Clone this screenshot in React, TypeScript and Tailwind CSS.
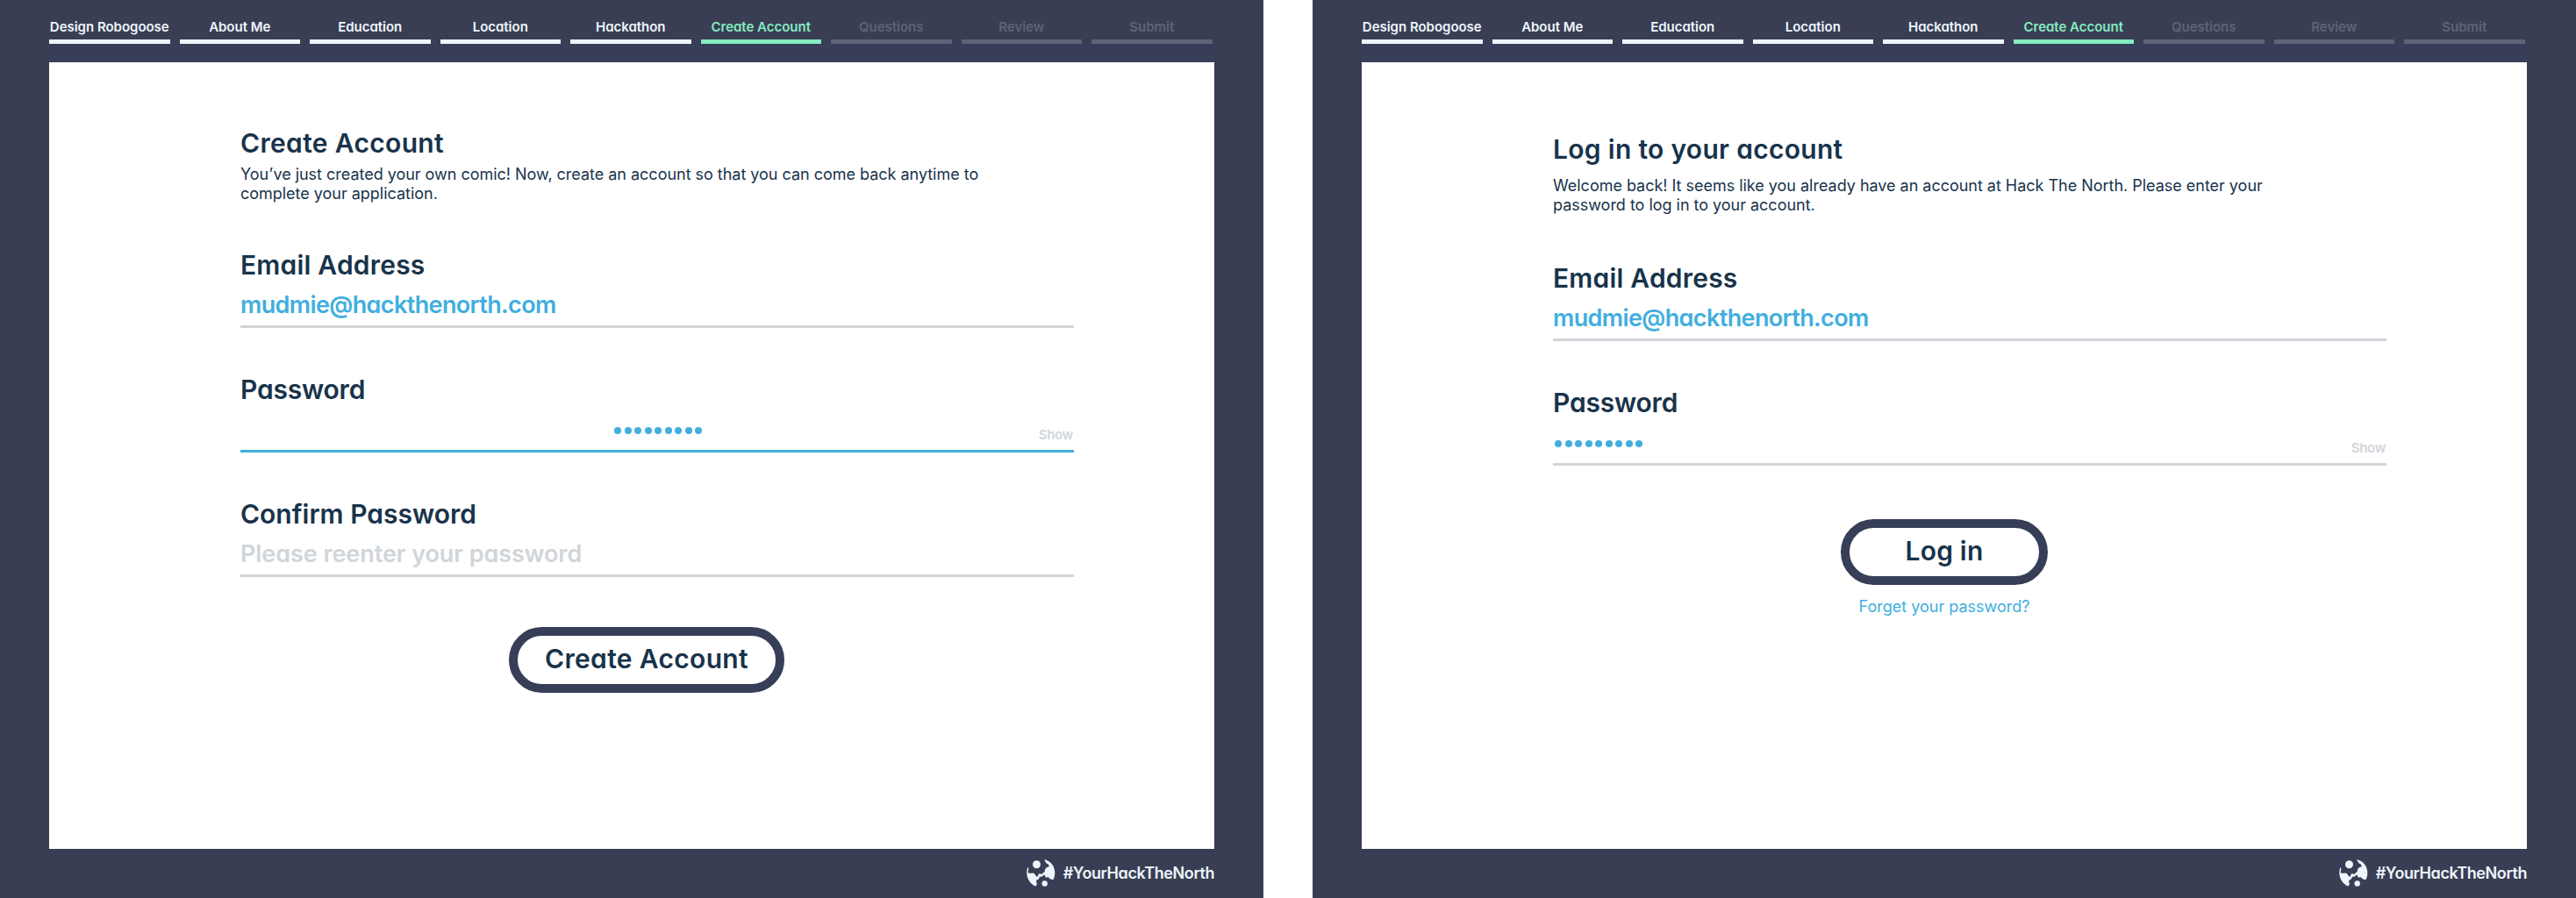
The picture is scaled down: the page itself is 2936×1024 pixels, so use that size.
import React from "react";

const steps = ["Design Robogoose", "About Me", "Education", "Location", "Hackathon", "Create Account", "Questions", "Review", "Submit"];
const current = 5;

function Nav() {
  return (
    <nav className="flex h-[50px] w-[1325.5px] gap-[11px]">
      {steps.map((s, i) => (
        <div
          key={s}
          className={
            "flex min-w-0 flex-1 basis-0 flex-col border-b-[5px] pt-[21px] text-center text-[15px] leading-[20px] font-semibold tracking-[-0.02px] whitespace-nowrap " +
            (i < current ? "border-[#edf6fc] text-[#edf6fc]" : i === current ? "border-[#84ebc0] text-[#84ebc0]" : "border-[#5f6377] text-[#5f6377]")
          }
        >
          {s}
        </div>
      ))}
    </nav>
  );
}

function Logo() {
  return (
    <svg width="33" height="32" viewBox="0 0 33 32" fill="#edf6fc">
      <circle cx="11.500" cy="5.800" r="4.500" />
      <circle cx="20.700" cy="27.500" r="3.200" />
      <path d="M20.300 0C28 1.800 32.300 8.500 32.300 15c0 3-.5 5.500-1.600 7.700-1.500.6-4 0-4.700-1.200-.6-1.300-1.500-1.500-2.700-1-1.500.5-2.300-.7-2.300-2.200-.2-1.100-1-1-1.700-.3-1 1.200-2 2.200-3.500 1.700-.8-.2-1.300.3-1.300 1.300-.2 1.500-1.300 2-2.500 2.200-1 1-1.200 2.200-.6 3.400.8 1.500.3 3.300-1.400 4C4.500 28 .3 22 .3 15.500c0-2.400.4-4.600 1.200-6.400l1 1.600c-.3 1.300-1 2.700-.7 4.600 1.700 1 3.200.4 5 .3 2.100 0 2.900 1.600 3.700 3 .6 1 1.600 1.400 2.300.6.6-1.200.5-2.700 1.700-3 1.300-.3 2 .9 3.200.5 1.300-.5 1-2.200 3-2.400-.1-3 1.300-5.500 4.600-5.800.7-1.600.2-2.600-1.200-3.300-1.700-.8-3.200-2.600-3.800-5.200Z" />
    </svg>
  );
}

function Dots() {
  return (
    <div className="flex gap-[3.5px]">
      {Array.from({ length: 9 }, (_, i) => (
        <span key={i} className="size-2 rounded-full bg-[#41aede]" />
      ))}
    </div>
  );
}

function Field({ label, labelClass, active, children }: { label: string; labelClass: string; active?: boolean; children: React.ReactNode }) {
  return (
    <div className={"flex h-[90px] w-[950px] flex-col border-b-[3px] " + (active ? "border-[#41aede]" : "border-[#d0d5da]")}>
      <label className={"text-[30px] leading-9 font-semibold " + labelClass}>{label}</label>
      {children}
    </div>
  );
}

function EmailField() {
  return (
    <Field label="Email Address" labelClass="tracking-[0.2px]">
      <div className="pt-[10px] text-[27px] leading-9 font-semibold tracking-[-0.62px] text-[#41aede]">mudmie@hackthenorth.com</div>
    </Field>
  );
}

function PasswordRow({ centered }: { centered?: boolean }) {
  return (
    <div className="relative flex h-[51px]">
      <div className={"flex w-full pt-[25px] " + (centered ? "justify-center pl-0.5" : "pl-0.5")}>
        <Dots />
      </div>
      <span className="absolute right-px bottom-[7px] text-[15px] leading-5 font-semibold tracking-[-0.3px] text-[#d0d5da]">Show</span>
    </div>
  );
}

function Screen({ children }: { children: React.ReactNode }) {
  return (
    <section className="flex h-[1024px] w-[1440px] flex-col bg-[#3a3e54] px-14">
      <Nav />
      <div className="h-[21px] bg-[#383e57]" />
      <main className="flex h-[897px] flex-col bg-white pl-[218px] text-[#18334b]">{children}</main>
      <footer className="flex h-14 items-start justify-end gap-[9px] pt-3">
        <Logo />
        <span className="pt-1 text-[18px] leading-6 font-semibold tracking-[-0.42px] text-[#edf6fc]">#YourHackTheNorth</span>
      </footer>
    </section>
  );
}

export default function App() {
  return (
    <div className="flex h-[1024px] w-[2936px] justify-between overflow-hidden bg-white font-['Inter',sans-serif] [font-feature-settings:'cv11','ss03']">
      <Screen>
        <h1 className="pt-[74px] text-[30px] leading-9 font-semibold tracking-[0.33px]">Create Account</h1>
        <p className="mt-[7px] text-[18px] leading-[22px] tracking-[-0.02px] [font-feature-settings:normal]">
          You’ve just created your own comic! Now, create an account so that you can come back anytime to
          <br />
          complete your application.
        </p>
        <div className="mt-[52px] flex flex-col gap-[52px]">
          <EmailField />
          <Field label="Password" labelClass="tracking-[-0.2px]" active>
            <PasswordRow centered />
          </Field>
          <Field label="Confirm Password" labelClass="tracking-normal">
            <div className="pt-[10px] text-[27px] leading-9 font-semibold tracking-[-0.07px] text-[#d0d5da]">Please reenter your password</div>
          </Field>
        </div>
        <button className="mt-[57px] ml-[306px] h-[75px] w-[314px] rounded-full border-[10px] border-[#373e58] pb-[3px] text-[30px] leading-9 font-semibold tracking-[0.33px]">
          Create Account
        </button>
      </Screen>
      <Screen>
        <h1 className="pt-[81px] text-[30px] leading-9 font-semibold tracking-[0.3px]">Log in to your account</h1>
        <p className="mt-[13px] text-[18px] leading-[22px] tracking-[-0.02px] [font-feature-settings:normal]">
          Welcome back! It seems like you already have an account at Hack The North. Please enter your
          <br />
          password to log in to your account.
        </p>
        <div className="mt-[54px] flex flex-col gap-[52px]">
          <EmailField />
          <Field label="Password" labelClass="tracking-[-0.2px]">
            <PasswordRow />
          </Field>
        </div>
        <div className="mt-[61px] ml-[328px] flex w-[236px] flex-col items-center">
          <button className="h-[75px] w-[236px] rounded-full border-[10px] border-[#373e58] pb-[3px] text-[30px] leading-9 font-semibold tracking-[0.2px]">Log in</button>
          <a className="mt-[14px] text-[18px] leading-[22px] text-[#41aede] [font-feature-settings:normal]">Forget your password?</a>
        </div>
      </Screen>
    </div>
  );
}
